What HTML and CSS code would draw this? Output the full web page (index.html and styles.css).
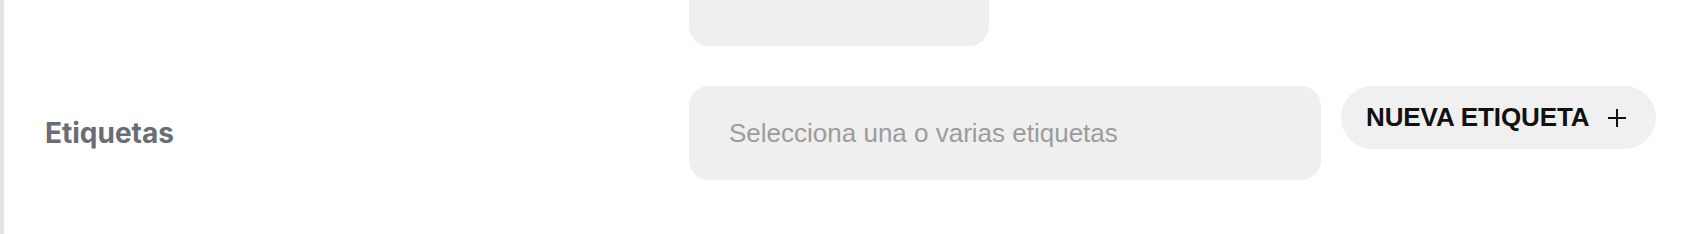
FILE: index.html
```html
<!DOCTYPE html>
<html lang="es">
<head>
<meta charset="utf-8">
<link rel="stylesheet" href="styles.css">
</head>
<body>
<div class="page">
  <div class="row row-prev">
    <div class="label"></div>
    <div class="field field-prev"></div>
  </div>
  <div class="row">
    <div class="label">Etiquetas</div>
    <div class="field field-tags">Selecciona una o varias etiquetas</div>
    <button class="btn-new" type="button">
      <span>NUEVA ETIQUETA</span>
      <svg class="plus" width="20" height="20" viewBox="0 0 20 20" aria-hidden="true">
        <path d="M10 1v18M1 10h18" stroke="#111" stroke-width="2" fill="none"/>
      </svg>
    </button>
  </div>
</div>
</body>
</html>
```
FILE: styles.css
```css
html, body {
  margin: 0;
  padding: 0;
  background: #ffffff;
}
.page {
  box-sizing: border-box;
  height: 234px;
  border-left: 4px solid #e3e5e8;
  padding-left: 41px;
  display: flex;
  flex-direction: column;
  gap: 40px;
}
.row {
  display: flex;
  align-items: flex-start;
}
.label {
  width: 644px;
  flex: none;
  font-family: Inter, "Liberation Sans", sans-serif;
  font-weight: 700;
  font-size: 28px;
  color: #6a6d73;
  line-height: 94px;
}
.row-prev .label {
  line-height: 0;
}
.field {
  box-sizing: border-box;
  background: #efefef;
  border-radius: 20px;
  flex: none;
}
.field-prev {
  width: 300px;
  height: 46px;
  border-radius: 0 0 20px 20px;
}
.field-tags {
  width: 632px;
  height: 94px;
  padding-left: 40px;
  font-family: "Liberation Sans", Arial, sans-serif;
  font-size: 26px;
  line-height: 94px;
  color: #9c9c9c;
}
.btn-new {
  margin-left: 20px;
  height: 63px;
  width: 315px;
  border: none;
  border-radius: 32px;
  background: #f0f0f0;
  padding: 0 0 0 25px;
  display: flex;
  align-items: center;
  gap: 18px;
  font-family: "Liberation Sans", Arial, sans-serif;
  font-weight: 700;
  font-size: 26px;
  letter-spacing: -0.1px;
  color: #111111;
  cursor: pointer;
}
.plus {
  display: block;
  flex: none;
}
```
